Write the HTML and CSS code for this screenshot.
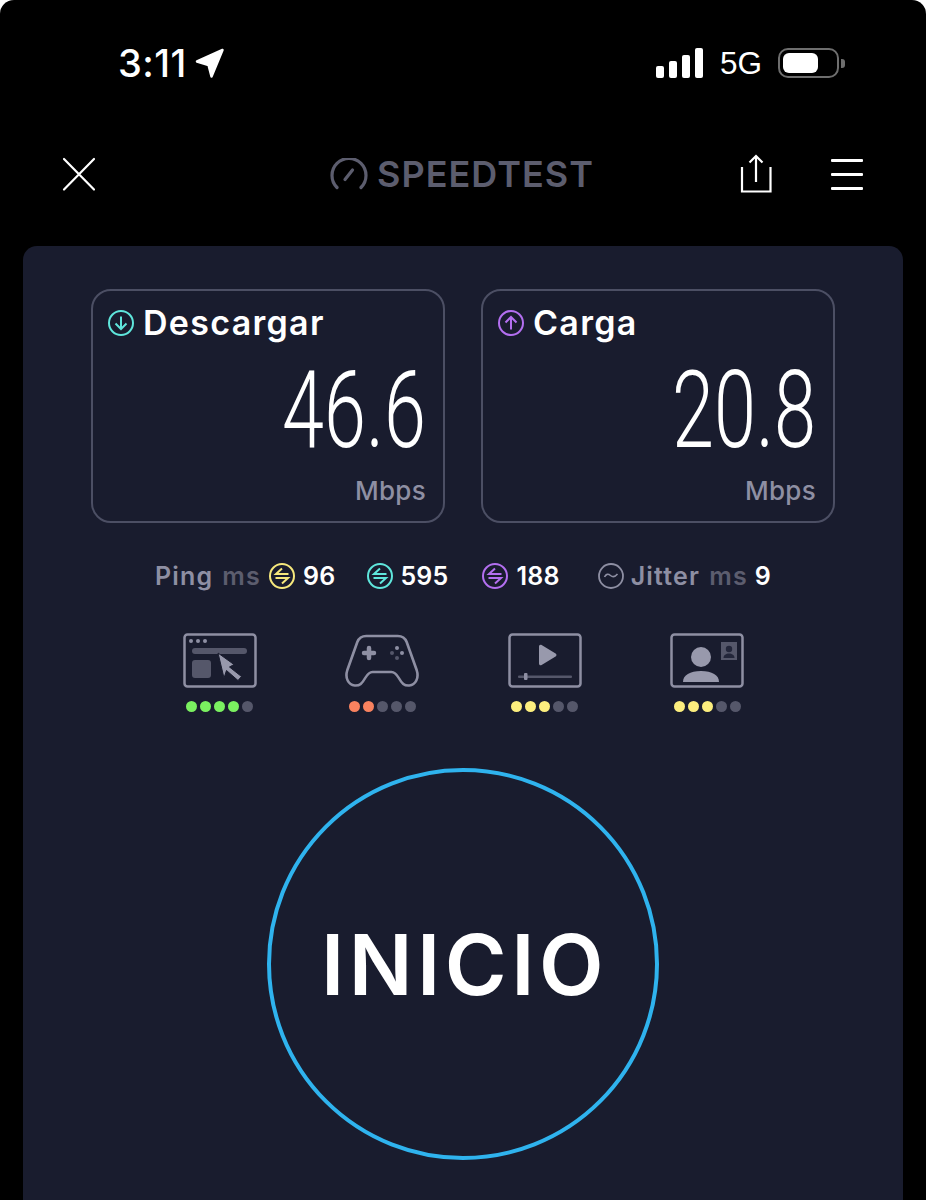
FILE: index.html
```html
<!DOCTYPE html>
<html lang="en">
<head>
    <meta charset="UTF-8">
    <meta name="viewport" content="width=device-width, initial-scale=1.0">
    <title>Speedtest</title>
    <link rel="stylesheet" href="styles.css">
</head>
<body>
<div class="phone">
    <div class="statusbar">
        <div class="clock">
            <span class="time">3:11</span>
            <svg class="arrow" width="32" height="32" viewBox="0 0 32 32"><path d="M28.500 3 3 14.500l11.500 3.500 3 11.500z" fill="#fff" stroke="#fff" stroke-width="2.500" stroke-linejoin="round"/></svg>
        </div>
        <div class="indicators">
            <div class="signal"><i class="b1"></i><i class="b2"></i><i class="b3"></i><i class="b4"></i></div>
            <span class="net">5G</span>
            <div class="battery"><div class="level"></div></div>
            <div class="nub"></div>
        </div>
    </div>

    <div class="navbar">
        <svg class="nav-icon" width="36" height="36" viewBox="0 0 36 36"><path d="M3 3 33 33.500M33 3 3 33.500" stroke="#fff" stroke-width="2.200" stroke-linecap="round"/></svg>
        <div class="brand">
            <svg width="38" height="32" viewBox="0 0 38 32"><path d="M7 29.500A17 17 0 1 1 31 29.500" fill="none" stroke="#5c5d6e" stroke-width="3.200" stroke-linecap="round"/><path d="M15 21.500 22.500 12" stroke="#5c5d6e" stroke-width="3.200" stroke-linecap="round"/></svg>
            <span>SPEEDTEST</span>
        </div>
        <div class="nav-right">
            <svg width="32" height="40" viewBox="0 0 32 40"><path d="M2 13V37.500H30.500V13M16 28V2M9.500 8.500 16 2l6.500 6.500" fill="none" stroke="#fff" stroke-width="2.200"/></svg>
            <div class="burger"><i></i><i></i><i></i></div>
        </div>
    </div>

    <div class="card">
        <div class="tiles">
            <div class="tile">
                <div class="tile-head">
                    <svg width="28" height="28" viewBox="0 0 28 28"><circle cx="14" cy="14" r="12" fill="none" stroke="#5fe6dc" stroke-width="2"/><path d="M14 7.500V20M8.500 14.500 14 20l5.500-5.500" fill="none" stroke="#5fe6dc" stroke-width="2"/></svg>
                    <span>Descargar</span>
                </div>
                <div class="speed">46.6</div>
                <div class="unit">Mbps</div>
            </div>
            <div class="tile">
                <div class="tile-head">
                    <svg width="28" height="28" viewBox="0 0 28 28"><circle cx="14" cy="14" r="12" fill="none" stroke="#b36ff0" stroke-width="2"/><path d="M14 20.500V8M8.500 13.500 14 8l5.500 5.500" fill="none" stroke="#b36ff0" stroke-width="2"/></svg>
                    <span>Carga</span>
                </div>
                <div class="speed">20.8</div>
                <div class="unit">Mbps</div>
            </div>
        </div>

        <div class="stats">
            <span class="stat-label">Ping</span>
            <span class="stat-unit">ms</span>
            <svg class="ping-icon" width="28" height="28" viewBox="0 0 28 28"><circle cx="14" cy="14" r="12" fill="none" stroke="#f6e87c" stroke-width="2"/><path d="M20.500 12H8L14 6.500M7.500 16H20L14 21.500" fill="none" stroke="#f6e87c" stroke-width="2"/></svg>
            <span class="stat-value v1">96</span>
            <svg class="ping-icon" width="28" height="28" viewBox="0 0 28 28"><circle cx="14" cy="14" r="12" fill="none" stroke="#5fe6dc" stroke-width="2"/><path d="M20.500 12H8L14 6.500M7.500 16H20L14 21.500" fill="none" stroke="#5fe6dc" stroke-width="2"/></svg>
            <span class="stat-value v2">595</span>
            <svg class="ping-icon" width="28" height="28" viewBox="0 0 28 28"><circle cx="14" cy="14" r="12" fill="none" stroke="#b36ff0" stroke-width="2"/><path d="M20.500 12H8L14 6.500M7.500 16H20L14 21.500" fill="none" stroke="#b36ff0" stroke-width="2"/></svg>
            <span class="stat-value v3">188</span>
            <svg class="ping-icon" width="28" height="28" viewBox="0 0 28 28"><circle cx="14" cy="14" r="12" fill="none" stroke="#8e8fa3" stroke-width="1.800"/><path d="M7.500 15c1.500-3 3.500-3.500 6-1.500s4.500 1.500 7-1.500" fill="none" stroke="#8e8fa3" stroke-width="1.600"/></svg>
            <span class="stat-label jitter">Jitter</span>
            <span class="stat-unit unit2">ms</span>
            <span class="stat-value last">9</span>
        </div>

        <div class="apps">
            <div class="app">
                <svg width="74" height="56" viewBox="0 0 74 56">
                    <rect x="1.500" y="1.500" width="71" height="52" rx="3" fill="none" stroke="#8e8fa3" stroke-width="2.500"/>
                    <circle cx="8" cy="8" r="2" fill="#8e8fa3"/><circle cx="15" cy="8" r="2" fill="#8e8fa3"/><circle cx="22" cy="8" r="2" fill="#8e8fa3"/>
                    <rect x="9" y="15" width="55" height="6" rx="3" fill="#55576a"/>
                    <rect x="9" y="27" width="19" height="18" rx="3" fill="#55576a"/>
                    <path d="M35 20 51 31.500 46.500 34 58.500 43.500 55 47.500 43.500 37.500 41 45z" fill="#9899ac" stroke="#191c2e" stroke-width="1" stroke-linejoin="round"/>
                </svg>
                <div class="dots green"><i class="on"></i><i class="on"></i><i class="on"></i><i class="on"></i><i></i></div>
            </div>
            <div class="app">
                <svg width="74" height="56" viewBox="0 0 74 56">
                    <path transform="translate(37 0) scale(1.05 1) translate(-37 0)" d="M22 3H52c4 0 7 2 8.500 6L70 37c2.500 8-1 15-7 15.500-5 .4-7-2-10-7.500-2-3.500-4-6-7-6H28c-3 0-5 2.500-7 6-3 5.500-5 7.900-10 7.500C5 52 1.500 45 4 37L13.500 9C15 5 18 3 22 3z" fill="none" stroke="#8e8fa3" stroke-width="2.500"/>
                    <path d="M24 15v10M19 20h10" stroke="#8e8fa3" stroke-width="4.500" stroke-linecap="round"/>
                    <circle cx="52" cy="15" r="2" fill="#8e8fa3"/><circle cx="57" cy="20" r="2" fill="#8e8fa3"/><circle cx="47" cy="20" r="2" fill="#55576a"/><circle cx="52" cy="25" r="2" fill="#55576a"/>
                </svg>
                <div class="dots red"><i class="on"></i><i class="on"></i><i></i><i></i><i></i></div>
            </div>
            <div class="app">
                <svg width="74" height="56" viewBox="0 0 74 56">
                    <rect x="1.500" y="1.500" width="71" height="52" rx="3" fill="none" stroke="#8e8fa3" stroke-width="2.500"/>
                    <path d="M31 13.500c0-1.500 1.300-2.300 2.600-1.500l14 8.500c1.200.8 1.200 2.300 0 3l-14 8.500c-1.300.8-2.600 0-2.600-1.500z" fill="#9899ac"/>
                    <rect x="10" y="42.500" width="54" height="2.500" rx="1" fill="#55576a"/>
                    <rect x="16" y="40" width="3.500" height="7" rx="1" fill="#8e8fa3"/>
                </svg>
                <div class="dots yellow"><i class="on"></i><i class="on"></i><i class="on"></i><i></i><i></i></div>
            </div>
            <div class="app">
                <svg width="74" height="56" viewBox="0 0 74 56">
                    <rect x="1.500" y="1.500" width="71" height="52" rx="3" fill="none" stroke="#8e8fa3" stroke-width="2.500"/>
                    <circle cx="31" cy="24" r="10" fill="#9899ac"/>
                    <path d="M13 49c0-7 7-11 18-11s18 4 18 11z" fill="#9899ac"/>
                    <rect x="51" y="9" width="16" height="18" fill="#55576a"/>
                    <circle cx="59" cy="16" r="3.200" fill="#23263a"/>
                    <path d="M53.500 25c0-3 2.500-4.500 5.500-4.500s5.500 1.500 5.500 4.500z" fill="#23263a"/>
                </svg>
                <div class="dots yellow"><i class="on"></i><i class="on"></i><i class="on"></i><i></i><i></i></div>
            </div>
        </div>

        <div class="go"><span>INICIO</span></div>
    </div>
</div>
</body>
</html>
```

FILE: styles.css
```css
html, body {
    margin: 0;
    background: #fff;
}

.phone {
    width: 926px;
    height: 1200px;
    overflow: hidden;
    background: #000;
    border-radius: 14px 14px 0 0;
    display: flex;
    flex-direction: column;
    font-family: "Inter", "Liberation Sans", sans-serif;
    color: #fff;
}

/* status bar */
.statusbar {
    height: 126px;
    flex: none;
    display: flex;
    justify-content: space-between;
    align-items: center;
    padding: 0 81px 0 118px;
    box-sizing: border-box;
}

.clock {
    display: flex;
    align-items: center;
    gap: 7px;
}

.time {
    font-size: 38px;
    font-weight: 500;
    letter-spacing: 0.5px;
}

.indicators {
    display: flex;
    align-items: center;
}

.signal {
    display: flex;
    align-items: flex-end;
    gap: 5px;
    height: 30px;
}

.signal i {
    display: block;
    width: 8px;
    background: #fff;
    border-radius: 2px;
}

.b1 { height: 12px; }
.b2 { height: 17px; }
.b3 { height: 23px; }
.b4 { height: 30px; }

.net {
    font-family: "Liberation Sans", sans-serif;
    font-size: 31.500px;
    margin-left: 17px;
    margin-right: 16px;
}

.battery {
    width: 61px;
    height: 30px;
    box-sizing: border-box;
    border: 2px solid #6e6e6e;
    border-radius: 10px;
    padding: 3px;
}

.level {
    width: 35px;
    height: 20px;
    background: #fff;
    border-radius: 6px;
}

.nub {
    width: 4px;
    height: 9px;
    margin-left: 2px;
    background: #6e6e6e;
    border-radius: 0 3px 3px 0;
}

/* nav */
.navbar {
    height: 120px;
    flex: none;
    display: grid;
    grid-template-columns: 1fr auto 1fr;
    align-items: center;
    padding: 0 63px 24px 61px;
    box-sizing: border-box;
}

.brand {
    display: flex;
    align-items: center;
    gap: 9px;
    font-size: 36px;
    font-weight: 600;
    letter-spacing: 1px;
    color: #5c5d6e;
}

.nav-right {
    display: flex;
    align-items: center;
    justify-content: flex-end;
    gap: 59px;
}

.burger {
    display: flex;
    flex-direction: column;
    gap: 11px;
}

.burger i {
    display: block;
    width: 32px;
    height: 3px;
    background: #fff;
    border-radius: 1px;
}

/* main card */
.card {
    margin: 0 23px;
    flex: 1;
    background: #191c2e;
    border-radius: 14px 14px 0 0;
    padding-top: 43px;
}

.tiles {
    display: flex;
    justify-content: center;
    gap: 36px;
}

.tile {
    width: 354px;
    height: 234px;
    box-sizing: border-box;
    border: 2px solid #4c4f64;
    border-radius: 20px;
    padding: 12px 17px 0 14px;
}

.tile-head {
    display: flex;
    align-items: center;
    gap: 8px;
    font-size: 34px;
    font-weight: 600;
    line-height: 40px;
    letter-spacing: 1.300px;
}

.speed {
    font-family: "Roboto", sans-serif;
    font-weight: 300;
    font-size: 108px;
    line-height: 96px;
    margin-top: 19px;
    text-align: right;
    transform: scaleX(0.7);
    transform-origin: right center;
}

.unit {
    text-align: right;
    font-size: 26px;
    font-weight: 500;
    letter-spacing: 0.3px;
    color: #8e8fa3;
    margin-top: 17px;
}

/* ping row */
.stats {
    display: flex;
    justify-content: center;
    align-items: center;
    margin-top: 37px;
    height: 32px;
    font-size: 25px;
    font-weight: 600;
}

.stat-label {
    color: #8e8fa3;
    letter-spacing: 1.200px;
}

.stat-unit {
    color: #5c5d6e;
    letter-spacing: 1.200px;
    margin-left: 9px;
    margin-right: 7px;
}

.unit2 {
    margin-left: 9px;
    margin-right: 0;
}

.stat-value {
    letter-spacing: 0.2px;
    margin-left: 7px;
}

.last {
    margin-left: 7px;
}

.v1 {
    margin-right: 31px;
}

.v2 {
    margin-left: 6px;
    margin-right: 33px;
}

.v3 {
    margin-right: 37px;
}

.jitter {
    margin-left: 6px;
}

/* app icons */
.apps {
    display: flex;
    justify-content: center;
    gap: 88.500px;
    margin-top: 41px;
    padding-left: 1px;
}

.app {
    width: 74px;
    display: flex;
    flex-direction: column;
    align-items: center;
}

.dots {
    display: flex;
    gap: 3px;
    margin-top: 12px;
}

.dots i {
    display: block;
    width: 11px;
    height: 11px;
    border-radius: 50%;
    background: #55576a;
}

.green .on { background: #7af060; }
.red .on { background: #f8825f; }
.yellow .on { background: #fcee7e; }

/* start button */
.go {
    width: 392px;
    height: 392px;
    box-sizing: border-box;
    margin: 56px auto 0;
    border: 4px solid #2fb3ee;
    border-radius: 50%;
    display: flex;
    align-items: center;
    justify-content: center;
    padding-left: 3px;
    font-size: 84px;
    font-weight: 600;
    letter-spacing: 4.500px;
}
```
